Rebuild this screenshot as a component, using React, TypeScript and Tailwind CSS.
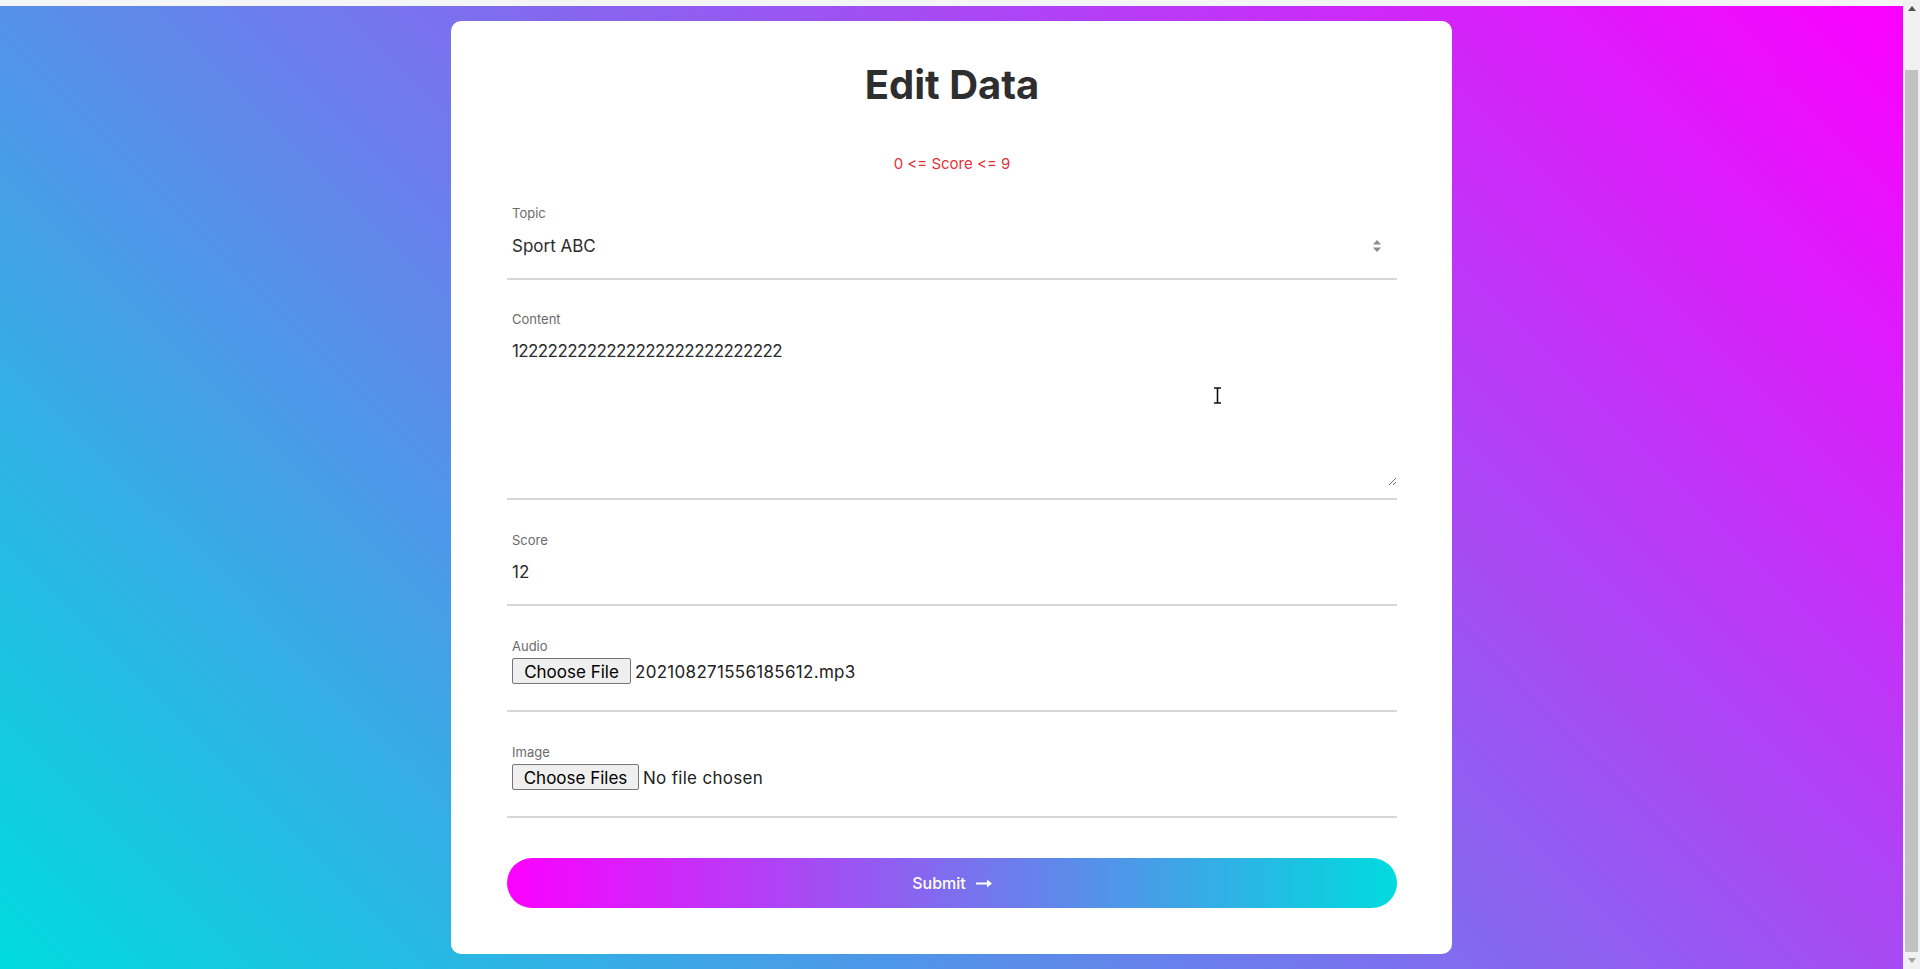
import { type ReactNode } from "react";

const font = "font-['Inter','Open_Sans',sans-serif]";

function Field({
  label,
  children,
  labelGap = "mt-[30px]",
}: {
  label: string;
  children: ReactNode;
  labelGap?: string;
}) {
  return (
    <div className={labelGap}>
      <div className="pl-[5px] text-[13px] leading-[20px] text-[#6b6b6b]">{label}</div>
      {children}
    </div>
  );
}

function Divider({ className = "" }: { className?: string }) {
  return <div className={`h-[2px] w-full bg-[#d6d6d6] ${className}`} />;
}

function FileButton({ label, width, file }: { label: string; width: string; file: string }) {
  return (
    <div className="mt-[2px] flex items-start pl-[5px]">
      <div
        className={`${width} h-[26px] rounded-[2px] border border-[#767676] bg-[#efefef] pt-[3px] text-center text-[17px] leading-[20px] text-black`}
      >
        {label}
      </div>
      <span className="ml-[4px] pt-[4px] text-[17px] leading-[20px] tracking-[0.3px] text-[#222]">{file}</span>
    </div>
  );
}

function Scrollbar() {
  return (
    <div className="flex h-full w-[17px] shrink-0 flex-col bg-[#f1f1f1]">
      <div className="flex h-[17px] items-center justify-center">
        <svg width="8" height="5" viewBox="0 0 8 5">
          <path d="M4 0 L8 5 L0 5 Z" fill="#505050" />
        </svg>
      </div>
      <div className="flex flex-1 flex-col px-[2px] pt-[53px]">
        <div className="flex-1 bg-[#c1c1c1]" />
      </div>
      <div className="flex h-[17px] items-center justify-center">
        <svg width="8" height="5" viewBox="0 0 8 5">
          <path d="M0 0 L8 0 L4 5 Z" fill="#a3a3a3" />
        </svg>
      </div>
    </div>
  );
}

export default function App() {
  return (
    <div className={`flex h-screen w-full overflow-hidden ${font}`}>
      <div className="flex min-w-0 flex-1 flex-col">
        <div className="h-[6px] shrink-0 bg-[#f4f5f6]" />
        <div className="flex flex-1 justify-center bg-[linear-gradient(45deg,#00dbde,#fc00ff)] pt-[15px]">
          <div className="relative h-[933px] w-[1001px] rounded-[10px] bg-white pl-[56px] pr-[55px] pt-[40px]">
            <h1 className="text-center text-[40px] font-bold leading-[48px] text-[#2e2e2e]">Edit Data</h1>
            <p className="mt-[43px] text-center text-[15px] leading-[24px] text-[#e5303c]">0 &lt;= Score &lt;= 9</p>

            <Field label="Topic" labelGap="mt-[27px]">
              <div className="mt-[10px] flex items-center justify-between pl-[5px] pr-[16px]">
                <span className="text-[17px] leading-[26px] text-[#2b2b2b]">Sport ABC</span>
                <svg width="8" height="12" viewBox="0 0 8 12">
                  <path d="M4 0 L8 4.5 L0 4.5 Z" fill="#8a8a8a" />
                  <path d="M0 7.5 L8 7.5 L4 12 Z" fill="#8a8a8a" />
                </svg>
              </div>
              <Divider className="mt-[19px]" />
            </Field>

            <Field label="Content" labelGap="mt-[29px]">
              <textarea
                defaultValue="1222222222222222222222222222"
                className="mt-[9px] block h-[148px] w-full resize-y border-0 bg-transparent pl-[5px] text-[17px] leading-[26px] tracking-[-0.6px] text-[#2b2b2b] outline-none"
              />
              <Divider className="mt-[12px]" />
            </Field>

            <Field label="Score" labelGap="mt-[30px]">
              <div className="mt-[9px] pl-[5px] text-[17px] leading-[26px] text-[#2b2b2b]">12</div>
              <Divider className="mt-[19px]" />
            </Field>

            <Field label="Audio" labelGap="mt-[30px]">
              <FileButton label="Choose File" width="w-[119px]" file="202108271556185612.mp3" />
              <Divider className="mt-[26px]" />
            </Field>

            <Field label="Image" labelGap="mt-[30px]">
              <div className="mt-[1px]">
                <FileButton label="Choose Files" width="w-[127px]" file="No file chosen" />
              </div>
              <Divider className="mt-[26px]" />
            </Field>

            <button className="mt-[40px] flex h-[50px] w-full items-center justify-center gap-[10px] rounded-full bg-[linear-gradient(to_right,#fc00ff,#00dbde)] text-[16px] font-medium text-white">
              Submit
              <svg width="16" height="9" viewBox="0 0 16 9">
                <path d="M0 3.5 H11 V0.5 L16 4.5 L11 8.5 V5.5 H0 Z" fill="white" />
              </svg>
            </button>

            <svg className="absolute left-[762px] top-[366px]" width="9" height="17" viewBox="0 0 9 17">
              <path d="M1 1 H8 M4.5 1 V16 M1 16 H8" stroke="#111" strokeWidth="1.6" fill="none" />
            </svg>
          </div>
        </div>
      </div>
      <Scrollbar />
    </div>
  );
}
